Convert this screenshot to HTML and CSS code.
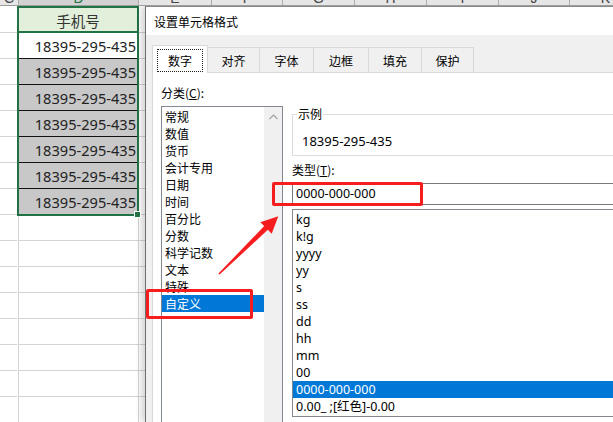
FILE: index.html
```html
<!DOCTYPE html>
<html lang="zh">
<head>
<meta charset="utf-8">
<title>设置单元格格式</title>
<link rel="stylesheet" href="styles.css">
</head>
<body>
<div class="colheads">
  <div class="ch w19"><span>C</span></div>
  <div class="ch w120 sel"><span>D</span></div>
  <div class="ch w73"><span>E</span></div>
  <div class="ch w71"><span>F</span></div>
  <div class="ch w72"><span>G</span></div>
  <div class="ch w72"><span>H</span></div>
  <div class="ch w72"><span>I</span></div>
  <div class="ch w71"><span>J</span></div>
  <div class="ch w72"><span>K</span></div>
</div>
<div class="main">
  <div class="sheet">
    <div class="col colc">
      <div class="gc top"></div><div class="gc"></div><div class="gc"></div><div class="gc"></div>
      <div class="gc"></div><div class="gc"></div><div class="gc"></div><div class="gc"></div>
      <div class="gc"></div><div class="gc"></div><div class="gc"></div><div class="gc"></div>
      <div class="gc"></div><div class="gc"></div><div class="gc"></div><div class="gc"></div>
    </div>
    <div class="col cold">
      <div class="hdr">手机号</div>
      <div class="data">
        <div class="row">18395-295-435</div>
        <div class="row">18395-295-435</div>
        <div class="row">18395-295-435</div>
        <div class="row">18395-295-435</div>
        <div class="row">18395-295-435</div>
        <div class="row">18395-295-435</div>
        <div class="row">18395-295-435</div>
        <span class="handle"></span>
      </div>
      <div class="ec first"></div><div class="ec"></div><div class="ec"></div><div class="ec"></div>
      <div class="ec"></div><div class="ec"></div><div class="ec"></div><div class="ec"></div>
    </div>
    <div class="col cole">
      <div class="gc top"></div><div class="gc"></div><div class="gc"></div><div class="gc"></div>
      <div class="gc"></div><div class="gc"></div><div class="gc"></div><div class="gc"></div>
      <div class="gc"></div><div class="gc"></div><div class="gc"></div><div class="gc"></div>
      <div class="gc"></div><div class="gc"></div><div class="gc"></div><div class="gc"></div>
    </div>
  </div>
  <div class="dialog">
    <div class="titlebar">设置单元格格式</div>
    <div class="dbody">
      <div class="tabs">
        <div class="tab active"><span class="focus">数字</span></div>
        <div class="tab t52">对齐</div>
        <div class="tab t54">字体</div>
        <div class="tab t55">边框</div>
        <div class="tab t53">填充</div>
        <div class="tab t52">保护</div>
      </div>
      <div class="page">
        <div class="leftcol">
          <div class="lbl">分类(<u>C</u>):</div>
          <div class="listbox">
            <div class="items">
              <div class="it">常规</div>
              <div class="it">数值</div>
              <div class="it">货币</div>
              <div class="it">会计专用</div>
              <div class="it">日期</div>
              <div class="it">时间</div>
              <div class="it">百分比</div>
              <div class="it">分数</div>
              <div class="it">科学记数</div>
              <div class="it">文本</div>
              <div class="it">特殊</div>
              <div class="it on">自定义</div>
              <div class="it"></div>
            </div>
            <div class="sbar">
              <svg class="up" width="9" height="6" viewBox="0 0 9 6"><polyline points="0.5,5 4.5,1 8.5,5" fill="none" stroke="#a3a3a3" stroke-width="1.2"/></svg>
            </div>
          </div>
        </div>
        <div class="rightcol">
          <fieldset class="group">
            <legend>示例</legend>
            <div class="sample">18395-295-435</div>
          </fieldset>
          <div class="lbl2">类型(<u>T</u>):</div>
          <div class="input">0000-000-000</div>
          <div class="tlist">
            <div class="ti">kg</div>
            <div class="ti">k!g</div>
            <div class="ti">yyyy</div>
            <div class="ti">yy</div>
            <div class="ti">s</div>
            <div class="ti">ss</div>
            <div class="ti">dd</div>
            <div class="ti">hh</div>
            <div class="ti">mm</div>
            <div class="ti">00</div>
            <div class="ti on">0000-000-000</div>
            <div class="ti">0.00_ ;[红色]-0.00</div>
          </div>
        </div>
      </div>
    </div>
  </div>
</div>
<div class="mark mark1"></div>
<div class="mark mark2"></div>
<svg class="arrow" width="613" height="422" viewBox="0 0 613 422">
  <polygon points="218.4,273.6 264.2,226.1 260.3,222.2 278.3,216.3 271.7,233.8 267.8,229.8 219.6,274.6" fill="#f51d1d"/>
</svg>
</body>
</html>
```
FILE: styles.css
```css
* { box-sizing: border-box; margin: 0; padding: 0; }
html, body { width: 613px; height: 422px; overflow: hidden; }
body {
  position: relative;
  background: #fff;
  font-family: "Noto Sans", "Noto Sans CJK SC", sans-serif;
  font-size: 12px;
  color: #000;
}

/* column header strip */
.colheads {
  display: flex;
  height: 6px;
  background: #e6e6e6;
  border-bottom: 1px solid #9d9d9d;
  overflow: hidden;
}
.ch {
  flex: none;
  height: 5px;
  display: flex;
  justify-content: center;
  align-items: flex-end;
  border-right: 1px solid #ababab;
  overflow: hidden;
  font-family: "Liberation Sans", sans-serif;
  font-size: 14px;
  color: #444;
}
.ch span { line-height: 14px; }
.ch.sel { background: #d2d2d2; color: #217346; }
.w19 { width: 19px; }
.w120 { width: 120px; }
.w73 { width: 73px; }
.w71 { width: 71px; }
.w72 { width: 72px; }

.main { display: flex; height: 416px; overflow: hidden; }

/* spreadsheet */
.sheet { display: flex; flex: none; width: 145px; }
.col { flex: none; }
.colc { width: 17px; }
.cold { width: 122px; }
.cole { width: 6px; }
.gc { height: 26px; border-bottom: 1px solid #d4d4d4; }
.gc.top { height: 27px; }

.hdr {
  height: 25px;
  border: 2px solid #217346;
  border-bottom: 0;
  background: #e2efda;
  display: flex;
  align-items: center;
  justify-content: center;
  padding-top: 1px;
  font-family: "Noto Sans CJK SC", sans-serif;
  font-size: 14.5px;
  color: #333;
}
.data {
  position: relative;
  border: 2px solid #217346;
}
.row {
  height: 26px;
  border-bottom: 1px solid #111;
  background: #c8c8c8;
  text-align: right;
  padding: 2px 1px 0 0;
  line-height: 23px;
  font-family: "Noto Sans", sans-serif;
  font-size: 14.6px;
  color: #222;
  white-space: nowrap;
}
.row:first-child { background: #fff; }
.row:nth-child(7) { height: 25px; border-bottom: 0; }
.handle {
  position: absolute;
  right: -4px;
  bottom: -4px;
  width: 7px;
  height: 7px;
  background: #217346;
  border: 1px solid #fff;
}
.ec {
  margin-left: 1px;
  width: 121px;
  height: 26px;
  border: 1px solid #d4d4d4;
  border-top: 0;
}
.ec.first { height: 25px; }

/* dialog */
.dialog {
  flex: none;
  width: 500px;
  border-left: 1px solid #6e6e6e;
  border-top: 1px solid #8a8a8a;
  background: #f0f0f0;
  box-shadow: -4px 0 6px rgba(0, 0, 0, 0.16);
  display: flex;
  flex-direction: column;
  overflow: hidden;
}
.titlebar {
  flex: none;
  height: 28px;
  background: #fff;
  padding: 6px 0 0 8px;
  line-height: 17px;
  font-size: 12px;
  font-family: "Noto Sans CJK SC", sans-serif;
}
.dbody {
  flex: 1;
  min-height: 0;
  display: flex;
  flex-direction: column;
  padding-left: 6px;
}
.tabs {
  flex: none;
  display: flex;
  align-items: flex-end;
  height: 28px;
  margin-top: 10px;
  margin-bottom: -1px;
}
.tab {
  flex: none;
  height: 26px;
  border-top: 1px solid #d9d9d9;
  border-right: 1px solid #d9d9d9;
  background: #f0f0f0;
  display: flex;
  align-items: center;
  justify-content: center;
  font-family: "Noto Sans CJK SC", sans-serif;
  font-size: 12px;
}
.tab.active {
  position: relative;
  z-index: 1;
  width: 56px;
  height: 28px;
  border-left: 1px solid #d9d9d9;
  background: #fff;
  padding: 3px 4px 1px 4px;
  align-items: stretch;
}
.focus {
  flex: 1;
  border: 1px dotted #222;
  display: flex;
  align-items: center;
  justify-content: center;
}
.t52 { width: 52px; }
.t53 { width: 53px; }
.t54 { width: 54px; }
.t55 { width: 55px; }

.page {
  flex: 1;
  min-height: 0;
  display: flex;
  background: #fff;
  border-top: 1px solid #d9d9d9;
  border-left: 1px solid #d9d9d9;
  padding-left: 8px;
}
.leftcol { flex: none; width: 122px; }
.lbl, .lbl2 {
  line-height: 14px;
  font-family: "Noto Sans CJK SC", sans-serif;
  font-size: 12px;
}
.lbl { margin-top: 13px; }
.listbox {
  margin-top: 6px;
  height: 330px;
  border: 1px solid #828790;
  display: flex;
}
.items { flex: 1; padding-top: 1px; }
.it {
  height: 17px;
  line-height: 17px;
  padding-left: 3px;
  font-family: "Noto Sans CJK SC", sans-serif;
  font-size: 12px;
}
.it.on, .ti.on { background: #0078d7; color: #fff; }
.sbar {
  flex: none;
  width: 18px;
  background: #f0f0f0;
  display: flex;
  justify-content: center;
  padding-top: 7px;
}
.up { display: block; }

.rightcol { flex: 1; margin-left: 9px; display: flex; flex-direction: column; }
.group {
  flex: none;
  margin-top: 34px;
  border: 1px solid #dcdcdc;
  padding: 0;
  min-width: 0;
}
.group legend {
  margin-left: 4px;
  padding: 0 1px;
  line-height: 14px;
  font-family: "Noto Sans CJK SC", sans-serif;
  font-size: 12px;
}
.sample {
  margin-top: 12px;
  padding: 0 0 6px 9px;
  line-height: 16px;
  font-size: 13px;
}
.lbl2 { flex: none; margin-top: 7px; }
.input {
  flex: none;
  margin-top: 6px;
  height: 22px;
  border: 1px solid #7a7a7a;
  padding-left: 3px;
  line-height: 20px;
  font-size: 12.5px;
}
.tlist {
  flex: none;
  margin-top: 4px;
  height: 208px;
  border: 1px solid #828790;
  padding: 1px 0;
}
.ti {
  height: 17px;
  line-height: 17px;
  padding-left: 3px;
  font-size: 12.5px;
  white-space: nowrap;
}

/* annotations */
.mark {
  position: absolute;
  border: 3px solid #f51d1d;
  border-radius: 2px;
}
.mark1 { left: 146px; top: 289px; width: 107px; height: 30px; }
.mark2 { left: 272px; top: 182px; width: 151px; height: 24px; }
.arrow { position: absolute; left: 0; top: 0; }
```
